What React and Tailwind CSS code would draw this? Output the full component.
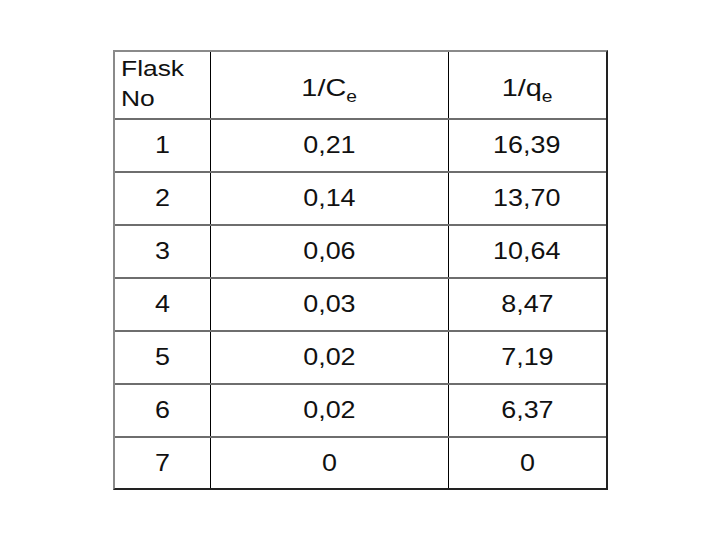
const rows = [
  ['1', '0,21', '16,39'],
  ['2', '0,14', '13,70'],
  ['3', '0,06', '10,64'],
  ['4', '0,03', '8,47'],
  ['5', '0,02', '7,19'],
  ['6', '0,02', '6,37'],
  ['7', '0', '0'],
];

const Txt = ({ children }) => (
  <span className="inline-block scale-x-[1.17] text-[23px] leading-none text-[#111]">{children}</span>
);

const Head = ({ main, sub }) => (
  <span className="inline-block scale-x-[1.2] text-[24px] leading-none text-[#111]">
    {main}
    <span className="relative top-[6px] text-[16px]">{sub}</span>
  </span>
);

export default function App() {
  return (
    <div className="w-[720px] h-[540px] bg-white flex items-center justify-center" style={{ fontFamily: '"Liberation Sans", Arial, sans-serif' }}>
      <div className="w-[495px] border-t-2 border-l-2 border-t-[#8a8a8a] border-l-[#8a8a8a] border-r-2 border-b-2 border-r-[#222] border-b-[#222]">
        <div className="h-[68px] flex border-b-2 border-[#6e6e6e]">
          <div className="w-[96px] border-r border-black pl-[6px] pt-[2px]">
            <div className="origin-left scale-x-[1.2] text-[22px] leading-[30px] text-[#111]">
              Flask
              <br />
              No
            </div>
          </div>
          <div className="w-[238px] border-r border-black flex items-center justify-center pt-[6px]">
            <Head main="1/C" sub="e" />
          </div>
          <div className="flex-1 flex items-center justify-center pt-[6px]">
            <Head main="1/q" sub="e" />
          </div>
        </div>
        {rows.map((r, i) => (
          <div
            key={r[0]}
            className={i < rows.length - 1 ? 'h-[53px] flex border-b-2 border-[#6e6e6e]' : 'h-[50px] flex'}
          >
            <div className="w-[96px] border-r border-black flex items-center justify-center">
              <Txt>{r[0]}</Txt>
            </div>
            <div className="w-[238px] border-r border-black flex items-center justify-center">
              <Txt>{r[1]}</Txt>
            </div>
            <div className="flex-1 flex items-center justify-center">
              <Txt>{r[2]}</Txt>
            </div>
          </div>
        ))}
      </div>
    </div>
  );
}
